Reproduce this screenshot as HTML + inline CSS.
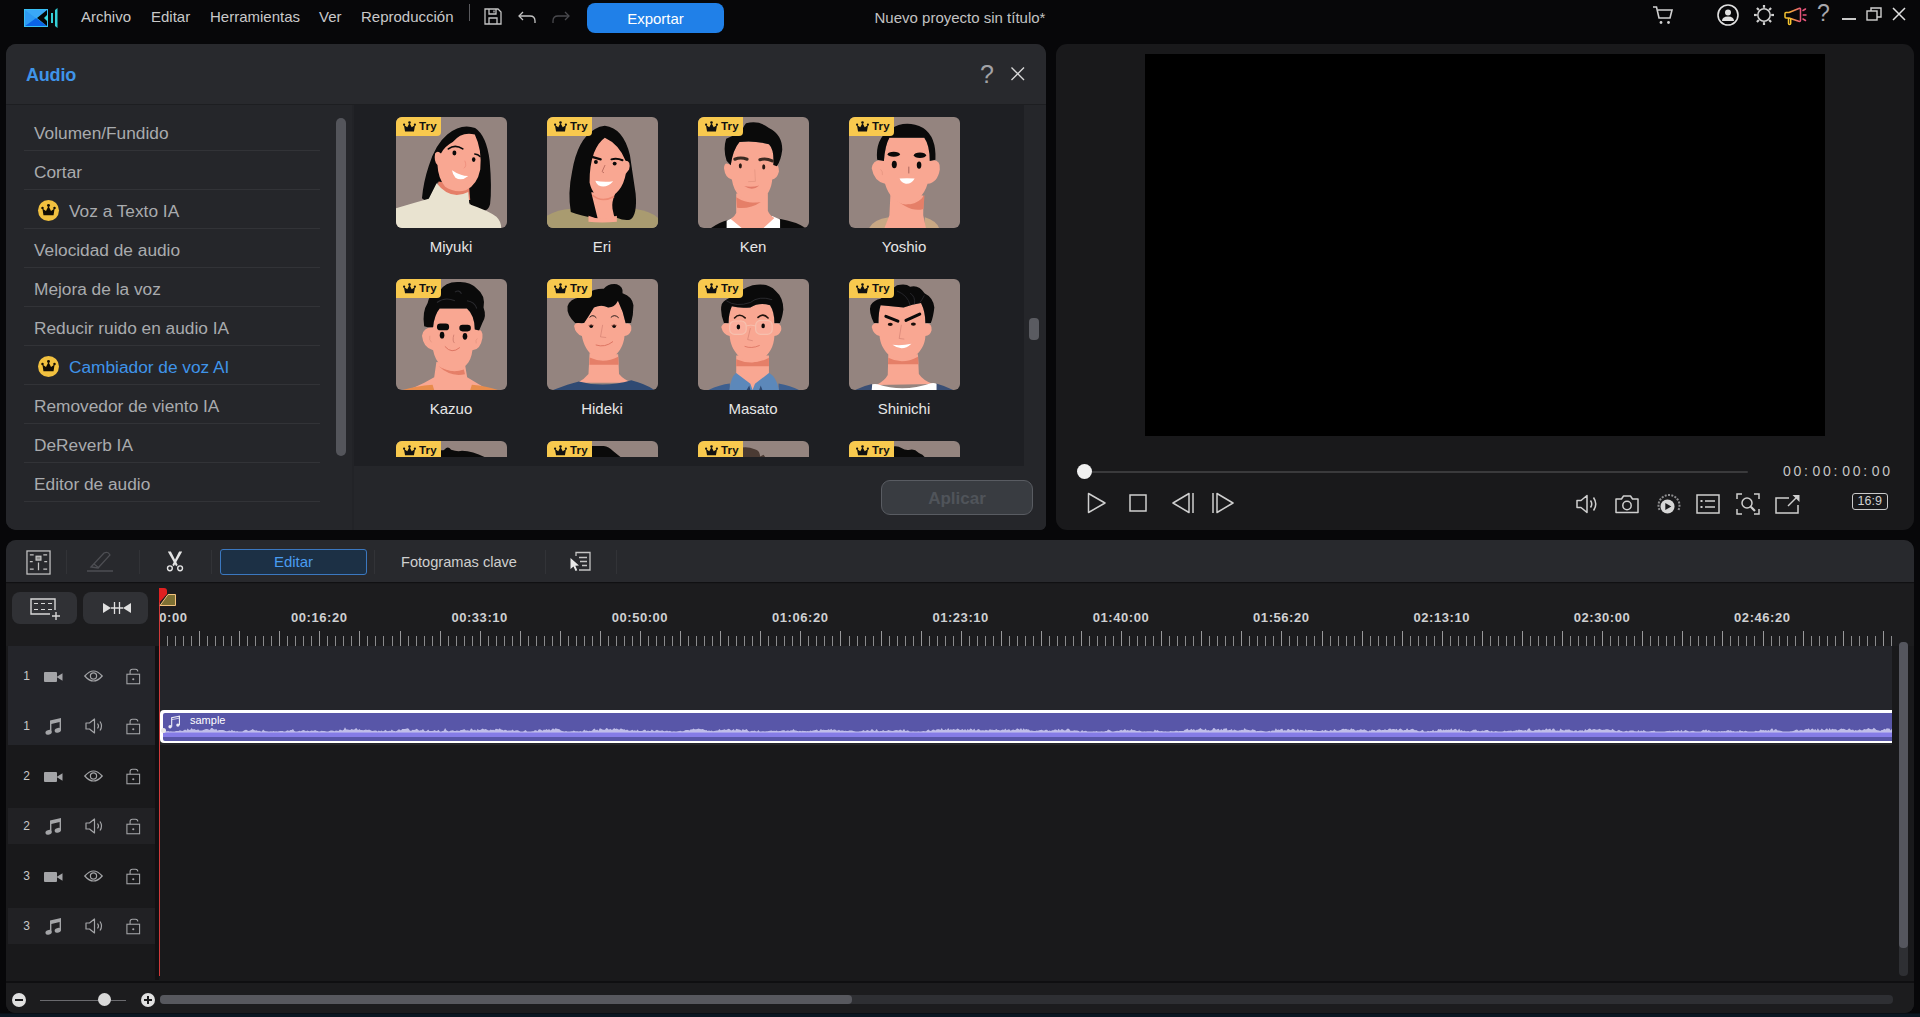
<!DOCTYPE html>
<html lang="es"><head><meta charset="utf-8"><title>Nuevo proyecto sin título</title>
<style>
*{box-sizing:border-box;margin:0;padding:0}
html,body{width:1920px;height:1017px;overflow:hidden;background:linear-gradient(#070709,#070709 1013px,#0b1722 1014px);font-family:"Liberation Sans",sans-serif;color:#c8c8c8}
.a{position:absolute}
svg{position:absolute;overflow:visible}
.menu span{position:absolute;top:8px;font-size:15px;color:#c9c9c9;white-space:nowrap}
#audio{left:6px;top:44px;width:1040px;height:486px;background:#25262a;border-radius:10px 10px 6px 10px;overflow:hidden}
#ahead{left:0;top:0;width:1040px;height:61px;background:#28292d;border-bottom:1px solid #1d1e21}
#side{left:0;top:61px;width:346px;height:425px;background:#25262a}
.it{position:absolute;left:18px;width:296px;height:39px;border-bottom:1px solid #323337;font-size:17.3px;color:#a9abae;line-height:42px;padding-left:10px;white-space:nowrap}
.it.cr{padding-left:45px}
.it.sel{color:#3f94e9}
#content{left:347px;top:61px;width:671px;height:361px;background:#1e1f23;overflow:hidden}
.card{position:absolute;width:111px;height:111px;border-radius:6px;background:#94847f;overflow:hidden}
.try{position:absolute;left:0;top:0;width:45px;height:19px;background:#f8c94e;border-bottom-right-radius:4px;font-size:11.5px;font-weight:bold;color:#111;line-height:19px;padding-left:23px;letter-spacing:0.2px}
.nm{position:absolute;width:111px;text-align:center;font-size:15px;color:#e6e6e6;white-space:nowrap}
#prev{left:1056px;top:44px;width:858px;height:486px;background:#19191b;border-radius:11px}
#tl{left:6px;top:540px;width:1908px;height:473px;background:#19191b;border-radius:10px 10px 9px 9px;overflow:hidden}
#tbar{left:0;top:0;width:1908px;height:43px;background:#28292d;border-bottom:1px solid #101012}
.sep{position:absolute;top:10px;width:1px;height:24px;background:#323337}
.rl{position:absolute;top:26px;font-size:13px;font-weight:bold;color:#cfd0d2;white-space:nowrap;letter-spacing:0.55px}
.a i{font-style:normal;margin-right:2px}
.tn{position:absolute;left:15.5px;width:10px;font-size:12px;color:#c8c8c8;text-align:center}
</style></head><body>

<div class="a menu" style="left:0;top:0;width:1920px;height:44px">
<span style="left:81px">Archivo</span>
<span style="left:151px">Editar</span>
<span style="left:210px">Herramientas</span>
<span style="left:319px">Ver</span>
<span style="left:361px">Reproducción</span>
<div class="a" style="left:469px;top:4px;width:1px;height:17px;background:#5a5a5e"></div>
<svg style="left:24px;top:8px" width="36" height="20" viewBox="0 0 36 20">
<defs><linearGradient id="lg" x1="0" y1="0" x2="1" y2="1"><stop offset="0" stop-color="#3fb6ff"/><stop offset="1" stop-color="#0a68e8"/></linearGradient></defs>
<rect x="0" y="1" width="24" height="18" fill="#39c0f5"/>
<path d="M1 2 L23 2 L12 10 Z" fill="#3aa8f7"/><path d="M1 2 L12 10 L1 18Z" fill="#2f9af3"/><path d="M1 18 L12 10 L23 18Z" fill="#0a63e6"/>
<path d="M23 2 L23 18 L13 10 Z" fill="#050608"/>
<path d="M24 6 L20 10 L24 14Z" fill="#3ad6e0"/>
<rect x="27" y="5" width="2" height="10" fill="#35d0d8"/><path d="M31 2 L33.5 0 L33.5 20 L31 18Z" fill="#35d0d8"/>
</svg>
<svg style="left:484px;top:8px" width="18" height="17" viewBox="0 0 18 17" fill="none" stroke="#c4c4c4" stroke-width="1.3"><path d="M1 1 H14 L17 4 V16 H1Z"/><path d="M5 1 V6 H12 V1"/><path d="M5 16 V10 H13 V16"/><path d="M10 2.5v2"/></svg>
<svg style="left:518px;top:11px" width="18" height="13" viewBox="0 0 18 13" fill="none" stroke="#c4c4c4" stroke-width="1.3"><path d="M5 1 L1 5 L5 9"/><path d="M1 5 H12 Q17 5 17 10 V12"/></svg>
<svg style="left:552px;top:11px" width="18" height="13" viewBox="0 0 18 13" fill="none" stroke="#4a4a4e" stroke-width="1.3"><path d="M13 1 L17 5 L13 9"/><path d="M17 5 H6 Q1 5 1 10 V12"/></svg>
<div class="a" style="left:587px;top:3px;width:137px;height:30px;background:#2080e8;border-radius:8px;color:#fff;font-size:15px;text-align:center;line-height:31px">Exportar</div>
<div class="a" style="left:760px;top:9px;width:400px;text-align:center;font-size:15px;color:#c2c2c2;white-space:nowrap">Nuevo proyecto sin título*</div>
<svg style="left:1653px;top:6px" width="22" height="20" viewBox="0 0 22 20" fill="none" stroke="#d0d0d0" stroke-width="1.6"><path d="M0 1 H3.5 L6 12 H17 L19 4 H5"/><circle cx="8" cy="16.5" r="1.4" fill="#d0d0d0" stroke="none"/><circle cx="15.5" cy="16.5" r="1.4" fill="#d0d0d0" stroke="none"/></svg>
<svg style="left:1717px;top:4px" width="22" height="22" viewBox="0 0 22 22" fill="none" stroke="#e0e0e0" stroke-width="1.6"><circle cx="11" cy="11" r="10"/><circle cx="11" cy="8.5" r="3" fill="#e0e0e0" stroke="none"/><path d="M5 17 Q5 12.5 11 12.5 Q17 12.5 17 17Z" fill="#e0e0e0" stroke="none"/></svg>
<svg style="left:1753px;top:4px" width="22" height="22" viewBox="-11 -11 22 22" fill="none" stroke="#d0d0d0" stroke-width="1.5"><circle r="6.2"/><path d="M7.20 0.00 L10.00 0.00" stroke-width="2.2"/><path d="M5.09 5.09 L7.07 7.07" stroke-width="2.2"/><path d="M0.00 7.20 L0.00 10.00" stroke-width="2.2"/><path d="M-5.09 5.09 L-7.07 7.07" stroke-width="2.2"/><path d="M-7.20 0.00 L-10.00 0.00" stroke-width="2.2"/><path d="M-5.09 -5.09 L-7.07 -7.07" stroke-width="2.2"/><path d="M-0.00 -7.20 L-0.00 -10.00" stroke-width="2.2"/><path d="M5.09 -5.09 L7.07 -7.07" stroke-width="2.2"/></svg>
<svg style="left:1784px;top:6px" width="24" height="20" viewBox="0 0 24 20" fill="none" stroke-width="1.5"><defs><linearGradient id="mg" x1="0" y1="0" x2="1" y2="0"><stop offset="0" stop-color="#f5c52e"/><stop offset="0.45" stop-color="#f0a040"/><stop offset="1" stop-color="#e8557c"/></linearGradient></defs><path d="M2 6.5 Q1 6.5 1 7.5 V11 Q1 12 2 12 H5 L15.5 15.5 Q16.5 15.5 16.5 14.5 V3 Q16.5 2 15.5 2.3 L5 6.5Z" stroke="url(#mg)" stroke-linejoin="round"/><path d="M4.5 12 V17.5 Q4.5 18.5 5.5 18.5 Q6.7 18.5 6.7 17.5 V12.6" stroke="#f5c52e"/><path d="M19 4.5 L21.5 3 M19.2 9 H22 M19 13 L21.5 14.5" stroke="#e8557c" stroke-linecap="round"/></svg>
<div class="a" style="left:1817px;top:0px;font-size:23px;color:#a8a8ae">?</div>
<div class="a" style="left:1842px;top:18px;width:14px;height:2px;background:#c8c8c8"></div>
<svg style="left:1866px;top:7px" width="16" height="14" viewBox="0 0 16 14" fill="none" stroke="#d0d0d0" stroke-width="1.4"><rect x="1" y="4" width="10" height="9"/><path d="M5 4 V1 H15 V10 H11"/></svg>
<svg style="left:1892px;top:7px" width="14" height="14" viewBox="0 0 14 14" fill="none" stroke="#e0e0e0" stroke-width="1.5"><path d="M1 1 L13 13 M13 1 L1 13"/></svg>
</div>
<div id="audio" class="a">
<div id="ahead" class="a"><div class="a" style="left:20px;top:20.5px;font-size:18px;font-weight:bold;color:#3f94e9;letter-spacing:-0.2px">Audio</div>
<div class="a" style="left:974px;top:15.5px;font-size:25px;color:#a2a2a6">?</div>
<svg style="left:1005px;top:23px" width="13.5" height="13.5" viewBox="0 0 14 14" fill="none" stroke="#d8d8d8" stroke-width="1.4"><path d="M0.5 0.5 L13.5 13.5 M13.5 0.5 L0.5 13.5"/></svg>
</div>
<div id="side" class="a">
<div class="it" style="top:7px">Volumen/Fundido</div>
<div class="it" style="top:46px">Cortar</div>
<div class="it cr" style="top:85px"><svg style="left:14px;top:10px" width="21" height="21" viewBox="0 0 20 20"><circle cx="10" cy="10" r="10" fill="#f2c13f"/><path d="M5.2 14.6 L4.2 8 L7.6 10.4 L10 5.8 L12.4 10.4 L15.8 8 L14.8 14.6Z" fill="#120d04"/><circle cx="4.3" cy="7.6" r="1.2" fill="#120d04"/><circle cx="10" cy="5.2" r="1.4" fill="#120d04"/><circle cx="15.7" cy="7.6" r="1.2" fill="#120d04"/></svg>Voz a Texto IA</div>
<div class="it" style="top:124px">Velocidad de audio</div>
<div class="it" style="top:163px">Mejora de la voz</div>
<div class="it" style="top:202px">Reducir ruido en audio IA</div>
<div class="it cr sel" style="top:241px"><svg style="left:14px;top:10px" width="21" height="21" viewBox="0 0 20 20"><circle cx="10" cy="10" r="10" fill="#f2c13f"/><path d="M5.2 14.6 L4.2 8 L7.6 10.4 L10 5.8 L12.4 10.4 L15.8 8 L14.8 14.6Z" fill="#120d04"/><circle cx="4.3" cy="7.6" r="1.2" fill="#120d04"/><circle cx="10" cy="5.2" r="1.4" fill="#120d04"/><circle cx="15.7" cy="7.6" r="1.2" fill="#120d04"/></svg>Cambiador de voz AI</div>
<div class="it" style="top:280px">Removedor de viento IA</div>
<div class="it" style="top:319px">DeReverb IA</div>
<div class="it" style="top:358px">Editor de audio</div>
<div class="a" style="left:330px;top:13px;width:10px;height:338px;background:#54555b;border-radius:5px"></div>
</div>
<div id="content" class="a"><div class="a" style="left:0;top:0;width:671px;height:352px;overflow:hidden">
<div class="card" id="c00" style="left:43px;top:12px"><svg style="left:0;top:0" width="111" height="111" viewBox="0 0 1017 1017">
<path d="M560 105 Q640 70 725 100 Q830 170 858 400 Q880 650 862 800 Q840 880 770 850 Q700 830 655 770 L650 600 L380 600 L330 720 Q285 790 238 745 Q250 600 300 450 Q360 250 470 160 Q520 120 560 105Z" fill="#0a0a0a"/>
<path d="M390 590 L370 760 L680 760 L670 640Z" fill="#e57f68"/>
<path d="M0 835 Q160 790 300 750 L372 608 Q500 770 662 688 L672 800 Q850 860 920 915 Q962 955 964 1017 L0 1017Z" fill="#e9e3d0"/>
<path d="M520 230 Q600 130 722 160 Q790 300 772 480 Q745 620 640 672 Q540 700 450 640 Q385 560 380 440 Q345 410 358 335 Q380 300 412 335 Q445 270 520 230Z" fill="#f9a792"/>
<path d="M480 292 Q540 245 612 292" fill="none" stroke="#0a0a0a" stroke-width="16" stroke-linecap="round"/>
<path d="M722 340 Q752 342 770 362" fill="none" stroke="#0a0a0a" stroke-width="14" stroke-linecap="round"/>
<ellipse cx="535" cy="330" rx="18" ry="22" fill="#0a0a0a"/><ellipse cx="712" cy="390" rx="16" ry="22" fill="#0a0a0a"/>
<path d="M630 400 Q652 450 622 470" fill="none" stroke="#ee8f7c" stroke-width="8"/>
<path d="M513 487 Q590 540 662 540 Q600 592 545 556 Q520 530 513 487Z" fill="#fff"/>
</svg><div class="try"><svg style="left:6.5px;top:3.5px" width="13" height="11" viewBox="0 0 14 11.5"><path d="M2.2 11 L1 4.2 L4.6 6.6 L7 2 L9.4 6.6 L13 4.2 L11.8 11Z" fill="#111"/><circle cx="1.2" cy="3.8" r="1.2" fill="#111"/><circle cx="7" cy="1.4" r="1.4" fill="#111"/><circle cx="12.8" cy="3.8" r="1.2" fill="#111"/></svg>Try</div></div>
<div class="nm" style="left:42.5px;top:133px">Miyuki</div>
<div class="card" id="c01" style="left:194px;top:12px"><svg style="left:0;top:0" width="111" height="111" viewBox="0 0 1017 1017">
<path d="M0 905 Q100 845 220 840 L800 840 Q950 860 1017 925 L1017 1017 L0 1017Z" fill="#a99b70"/>
<path d="M530 80 Q700 100 760 350 Q782 500 812 700 Q830 900 760 942 Q650 955 585 880 L470 932 Q300 905 218 870 Q188 700 230 500 Q280 200 440 110 Q480 85 530 80Z" fill="#0a0a0a"/>
<path d="M405 690 L468 945 L625 955 L600 840 Q590 780 625 700Z" fill="#f9a792"/>
<path d="M380 905 Q500 960 640 905 L640 960 Q500 975 380 960Z" fill="#f9a792"/>
<path d="M530 190 Q660 250 720 400 Q772 400 752 480 L722 520 Q690 700 540 752 Q420 742 390 600 Q388 450 430 330 Q470 230 530 190Z" fill="#f9a792"/>
<path d="M415 715 Q500 790 615 728" fill="none" stroke="#ee8a74" stroke-width="14"/>
<path d="M420 368 L492 388" stroke="#0a0a0a" stroke-width="20" stroke-linecap="round"/>
<path d="M590 388 Q640 374 692 396" fill="none" stroke="#0a0a0a" stroke-width="18" stroke-linecap="round"/>
<circle cx="448" cy="412" r="18" fill="#0a0a0a"/><circle cx="620" cy="427" r="18" fill="#0a0a0a"/>
<path d="M532 440 L505 500 L522 512" fill="none" stroke="#b8695c" stroke-width="8"/>
<path d="M443 583 Q520 600 607 588 Q540 662 470 626 Q450 610 443 583Z" fill="#fff"/>
</svg><div class="try"><svg style="left:6.5px;top:3.5px" width="13" height="11" viewBox="0 0 14 11.5"><path d="M2.2 11 L1 4.2 L4.6 6.6 L7 2 L9.4 6.6 L13 4.2 L11.8 11Z" fill="#111"/><circle cx="1.2" cy="3.8" r="1.2" fill="#111"/><circle cx="7" cy="1.4" r="1.4" fill="#111"/><circle cx="12.8" cy="3.8" r="1.2" fill="#111"/></svg>Try</div></div>
<div class="nm" style="left:193.5px;top:133px">Eri</div>
<div class="card" id="c02" style="left:345px;top:12px"><svg style="left:0;top:0" width="111" height="111" viewBox="0 0 1017 1017">
<path d="M120 1017 Q200 960 275 943 L265 1017Z" fill="#0a0a0a"/><path d="M745 933 Q900 960 985 1017 L745 1017Z" fill="#0a0a0a"/>
<path d="M262 950 L335 918 L410 1017 L262 1017Z" fill="#fff"/><path d="M752 940 L680 908 L595 1017 L752 1017Z" fill="#fff"/>
<path d="M350 700 L350 880 Q335 915 300 935 L400 1017 L600 1017 L700 925 Q655 900 640 860 L640 700Z" fill="#f9a792"/>
<path d="M350 735 Q450 800 575 778 Q480 845 358 832Z" fill="#e57f68"/>
<path d="M380 230 Q500 210 650 250 Q700 300 690 440 Q742 420 742 500 Q722 572 680 572 C670 700 590 782 500 782 C410 780 330 700 310 572 Q250 562 238 470 Q240 400 300 440 Q320 300 380 230Z" fill="#f9a792"/>
<path d="M440 58 Q560 28 650 100 Q772 160 772 300 Q760 400 722 452 L690 440 Q700 300 650 250 Q500 210 380 230 Q320 300 300 442 L262 400 Q228 300 258 200 Q330 160 400 150 Q410 90 440 58Z" fill="#0a0a0a"/>
<path d="M337 387 Q390 364 450 387" fill="none" stroke="#3b2a22" stroke-width="28" stroke-linecap="round"/>
<path d="M567 392 Q620 374 680 402" fill="none" stroke="#3b2a22" stroke-width="28" stroke-linecap="round"/>
<ellipse cx="388" cy="447" rx="14" ry="24" fill="#2a1a14"/><ellipse cx="602" cy="457" rx="14" ry="24" fill="#2a1a14"/>
<path d="M520 480 L526 590 L460 592" fill="none" stroke="#e0907c" stroke-width="6"/>
<path d="M423 633 Q490 647 562 628 Q500 684 423 633Z" fill="#e17a68"/>
</svg><div class="try"><svg style="left:6.5px;top:3.5px" width="13" height="11" viewBox="0 0 14 11.5"><path d="M2.2 11 L1 4.2 L4.6 6.6 L7 2 L9.4 6.6 L13 4.2 L11.8 11Z" fill="#111"/><circle cx="1.2" cy="3.8" r="1.2" fill="#111"/><circle cx="7" cy="1.4" r="1.4" fill="#111"/><circle cx="12.8" cy="3.8" r="1.2" fill="#111"/></svg>Try</div></div>
<div class="nm" style="left:344.5px;top:133px">Ken</div>
<div class="card" id="c03" style="left:496px;top:12px"><svg style="left:0;top:0" width="111" height="111" viewBox="0 0 1017 1017">
<path d="M185 1017 Q220 940 365 918 L335 1017Z" fill="#c9a884"/><path d="M695 918 Q800 950 825 1017 L690 1017Z" fill="#c9a884"/>
<path d="M380 700 L370 900 L325 1017 L705 1017 L680 900 L682 720Z" fill="#f9a792"/>
<path d="M380 715 Q480 800 560 800 Q640 790 692 715 L682 842 Q560 885 380 715Z" fill="#e57f68"/>
<path d="M370 190 L690 190 Q740 260 740 400 Q842 380 832 480 Q812 602 720 612 C690 720 600 800 520 802 C440 800 360 720 330 612 Q230 592 208 470 Q220 380 320 400 Q330 260 370 190Z" fill="#f9a792"/>
<path d="M258 392 Q238 200 380 110 Q520 18 680 100 Q802 180 792 392 L740 402 Q740 260 690 190 L370 190 Q330 260 320 402Z" fill="#0a0a0a"/>
<ellipse cx="410" cy="342" rx="56" ry="23" fill="#0a0a0a"/><ellipse cx="650" cy="350" rx="56" ry="25" fill="#0a0a0a"/>
<ellipse cx="415" cy="435" rx="23" ry="34" fill="#0a0a0a"/><ellipse cx="642" cy="440" rx="21" ry="33" fill="#0a0a0a"/>
<path d="M548 455 L548 517" stroke="#a8655b" stroke-width="9"/>
<path d="M290 480 Q312 500 306 532" fill="none" stroke="#e0907c" stroke-width="6"/>
<path d="M463 563 Q530 558 602 563 Q570 617 520 612 Q480 602 463 563Z" fill="#fff"/>
</svg><div class="try"><svg style="left:6.5px;top:3.5px" width="13" height="11" viewBox="0 0 14 11.5"><path d="M2.2 11 L1 4.2 L4.6 6.6 L7 2 L9.4 6.6 L13 4.2 L11.8 11Z" fill="#111"/><circle cx="1.2" cy="3.8" r="1.2" fill="#111"/><circle cx="7" cy="1.4" r="1.4" fill="#111"/><circle cx="12.8" cy="3.8" r="1.2" fill="#111"/></svg>Try</div></div>
<div class="nm" style="left:495.5px;top:133px">Yoshio</div>
<div class="card" id="c10" style="left:43px;top:174px"><svg style="left:0;top:0" width="111" height="111" viewBox="0 0 1017 1017">
<path d="M370 760 L350 900 Q250 960 150 1002 L150 1017 L850 1017 Q750 960 652 900 L632 780Z" fill="#f9a792"/>
<path d="M388 798 Q500 872 622 830 L632 872 Q500 902 388 798Z" fill="#e57f68"/>
<path d="M60 1017 Q180 978 335 968 L350 1017Z" fill="#e88c4c"/><path d="M695 968 Q830 978 935 1017 L680 1017Z" fill="#e88c4c"/>
<path d="M400 270 L650 270 Q720 330 722 460 Q802 450 792 540 Q772 652 700 652 C690 770 610 840 530 842 C450 840 360 770 340 652 Q250 632 238 520 Q250 440 340 442 Q350 330 400 270Z" fill="#f9a792"/>
<path d="M258 432 Q238 300 290 220 Q300 140 400 110 Q450 28 560 28 Q680 18 742 90 Q822 150 802 260 Q832 340 792 400 L762 472 L722 462 Q720 330 650 270 L400 270 Q350 330 340 442 L290 442Z" fill="#0a0a0a"/>
<path d="M375 215 Q450 160 540 200 M540 120 Q580 95 600 135 M650 200 Q720 210 740 270" fill="none" stroke="#2a2a2e" stroke-width="10"/>
<rect x="375" y="408" width="112" height="62" rx="31" fill="#0a0a0a"/><rect x="580" y="420" width="106" height="60" rx="30" fill="#0a0a0a"/>
<ellipse cx="422" cy="515" rx="21" ry="31" fill="#0a0a0a"/><ellipse cx="632" cy="525" rx="21" ry="31" fill="#0a0a0a"/>
<path d="M530 510 Q514 570 536 587" fill="none" stroke="#c9776a" stroke-width="7"/>
<path d="M450 620 Q510 692 582 630" fill="none" stroke="#dc7462" stroke-width="9" stroke-linecap="round"/>
<path d="M310 520 Q300 560 325 580 M745 545 Q725 560 735 590" fill="none" stroke="#e0907c" stroke-width="6"/>
</svg><div class="try"><svg style="left:6.5px;top:3.5px" width="13" height="11" viewBox="0 0 14 11.5"><path d="M2.2 11 L1 4.2 L4.6 6.6 L7 2 L9.4 6.6 L13 4.2 L11.8 11Z" fill="#111"/><circle cx="1.2" cy="3.8" r="1.2" fill="#111"/><circle cx="7" cy="1.4" r="1.4" fill="#111"/><circle cx="12.8" cy="3.8" r="1.2" fill="#111"/></svg>Try</div></div>
<div class="nm" style="left:42.5px;top:295px">Kazuo</div>
<div class="card" id="c11" style="left:194px;top:174px"><svg style="left:0;top:0" width="111" height="111" viewBox="0 0 1017 1017">
<path d="M390 680 L380 870 Q340 920 280 950 L780 950 Q700 920 660 870 L652 690Z" fill="#f9a792"/>
<path d="M390 720 Q520 780 652 712 L656 785 L388 785Z" fill="#e57f68"/>
<path d="M55 1017 Q200 960 292 938 Q520 1002 772 928 Q900 960 985 1017Z" fill="#2f4a73"/>
<path d="M430 260 Q500 230 560 260 Q620 260 650 200 Q700 300 722 410 Q782 400 772 470 Q752 522 710 522 C700 640 620 740 520 742 C420 740 340 640 320 522 Q260 502 248 430 Q260 390 320 410 L340 400 Q390 330 430 260Z" fill="#f9a792"/>
<path d="M258 402 Q178 330 188 250 Q210 180 300 170 Q380 120 430 100 Q480 88 520 90 Q560 38 640 48 Q702 70 692 130 Q782 160 792 240 Q792 330 770 402 L720 402 Q700 300 650 200 Q620 262 560 262 Q500 230 430 262 Q390 330 340 402Z" fill="#0a0a0a"/>
<path d="M390 352 Q420 318 452 356" fill="none" stroke="#0a0a0a" stroke-width="8"/><path d="M585 352 Q620 318 657 356" fill="none" stroke="#0a0a0a" stroke-width="8"/>
<circle cx="405" cy="434" r="16" fill="#0a0a0a"/><circle cx="615" cy="434" r="16" fill="#0a0a0a"/>
<path d="M380 425 H430 M590 425 H640" stroke="#7a3a30" stroke-width="5"/>
<path d="M510 420 L490 530 L542 536" fill="none" stroke="#c9776a" stroke-width="5"/>
<path d="M450 605 Q530 632 602 575" fill="none" stroke="#dc7462" stroke-width="9" stroke-linecap="round"/>
</svg><div class="try"><svg style="left:6.5px;top:3.5px" width="13" height="11" viewBox="0 0 14 11.5"><path d="M2.2 11 L1 4.2 L4.6 6.6 L7 2 L9.4 6.6 L13 4.2 L11.8 11Z" fill="#111"/><circle cx="1.2" cy="3.8" r="1.2" fill="#111"/><circle cx="7" cy="1.4" r="1.4" fill="#111"/><circle cx="12.8" cy="3.8" r="1.2" fill="#111"/></svg>Try</div></div>
<div class="nm" style="left:193.5px;top:295px">Hideki</div>
<div class="card" id="c12" style="left:345px;top:174px"><svg style="left:0;top:0" width="111" height="111" viewBox="0 0 1017 1017">
<path d="M95 1017 Q200 968 292 958 L292 1017Z" fill="#3d5f8f"/><path d="M738 958 Q850 978 925 1017 L738 1017Z" fill="#3d5f8f"/>
<path d="M288 1017 Q298 900 350 858 L650 858 Q722 900 742 1017Z" fill="#5c88ba"/>
<path d="M350 700 L350 862 L480 960 L500 1017 L522 960 L650 862 L650 700Z" fill="#f9a792"/>
<path d="M350 735 Q500 800 650 722 L650 800 L350 800Z" fill="#e57f68"/>
<path d="M445 1017 L470 975 L480 1017Z M560 1017 L575 975 L590 1017Z" fill="#2f4a73"/>
<path d="M310 250 Q380 270 480 260 Q560 210 660 240 Q700 300 700 410 Q772 400 762 470 Q742 522 700 522 C695 660 600 760 500 762 C400 760 300 660 290 522 Q230 512 213 440 Q230 390 280 410 Q280 320 310 250Z" fill="#f9a792"/>
<path d="M238 402 Q198 300 218 230 Q250 180 310 170 Q400 88 500 58 Q640 28 712 110 Q782 170 782 280 Q772 360 750 402 L700 402 Q700 300 660 240 Q560 210 480 260 Q380 270 310 250 Q280 320 280 402Z" fill="#0a0a0a"/>
<path d="M260 200 Q350 260 480 215 Q560 150 680 190" fill="none" stroke="#3a3a40" stroke-width="6"/>
<rect x="290" y="385" width="152" height="122" rx="45" fill="#fbb9a8" fill-opacity="0.45" stroke="#f6c0ae" stroke-width="11"/>
<rect x="528" y="380" width="152" height="127" rx="45" fill="#fbb9a8" fill-opacity="0.45" stroke="#f6c0ae" stroke-width="11"/>
<path d="M442 430 Q485 415 528 430" fill="none" stroke="#f6c0ae" stroke-width="9"/>
<path d="M335 357 Q380 308 432 357" fill="none" stroke="#22140e" stroke-width="15" stroke-linecap="round"/>
<path d="M550 352 Q595 308 642 357" fill="none" stroke="#22140e" stroke-width="15" stroke-linecap="round"/>
<ellipse cx="370" cy="440" rx="16" ry="22" fill="#0a0a0a"/><ellipse cx="597" cy="430" rx="16" ry="22" fill="#0a0a0a"/>
<path d="M480 450 L455 555 L502 566" fill="none" stroke="#c9776a" stroke-width="5"/>
<path d="M430 618 Q490 642 562 610" fill="none" stroke="#dc7462" stroke-width="8" stroke-linecap="round"/>
</svg><div class="try"><svg style="left:6.5px;top:3.5px" width="13" height="11" viewBox="0 0 14 11.5"><path d="M2.2 11 L1 4.2 L4.6 6.6 L7 2 L9.4 6.6 L13 4.2 L11.8 11Z" fill="#111"/><circle cx="1.2" cy="3.8" r="1.2" fill="#111"/><circle cx="7" cy="1.4" r="1.4" fill="#111"/><circle cx="12.8" cy="3.8" r="1.2" fill="#111"/></svg>Try</div></div>
<div class="nm" style="left:344.5px;top:295px">Masato</div>
<div class="card" id="c13" style="left:496px;top:174px"><svg style="left:0;top:0" width="111" height="111" viewBox="0 0 1017 1017">
<path d="M360 690 L355 880 Q330 930 250 972 L770 962 Q680 930 640 870 L632 690Z" fill="#f9a792"/>
<path d="M360 722 Q490 790 632 712 L636 782 L357 782Z" fill="#e57f68"/>
<path d="M55 1017 Q130 980 212 963 L212 1017Z" fill="#3a4f75"/><path d="M798 958 Q880 980 955 1017 L798 1017Z" fill="#3a4f75"/>
<path d="M208 1017 L213 965 Q240 958 262 965 Q500 1042 750 955 Q780 948 802 960 L802 1017Z" fill="#fff"/>
<path d="M290 240 Q380 250 500 260 Q580 230 660 220 Q700 300 700 410 Q762 400 757 470 Q742 522 700 522 C695 650 590 745 490 747 C390 745 290 650 280 522 Q225 512 208 440 Q220 395 270 410 Q270 300 290 240Z" fill="#f9a792"/>
<path d="M228 402 Q178 300 198 240 Q230 190 290 180 Q380 100 440 58 Q520 38 560 70 Q640 48 692 130 Q772 170 782 260 Q772 350 750 402 L700 402 Q700 300 660 220 Q580 230 500 260 Q380 250 290 240 Q270 300 270 402Z" fill="#0a0a0a"/>
<path d="M440 110 Q540 150 560 240 M560 130 Q610 160 600 230 M690 150 Q670 190 650 215" fill="none" stroke="#33333a" stroke-width="6"/>
<path d="M338 342 L448 386" stroke="#0a0a0a" stroke-width="28" stroke-linecap="round"/><path d="M522 380 L648 322" stroke="#0a0a0a" stroke-width="28" stroke-linecap="round"/>
<ellipse cx="378" cy="415" rx="23" ry="15" fill="#1a0e0a"/><ellipse cx="590" cy="413" rx="23" ry="15" fill="#1a0e0a"/>
<path d="M480 420 L460 545 L507 551" fill="none" stroke="#c9776a" stroke-width="5"/>
<path d="M398 603 Q490 612 572 593 Q490 672 398 603Z" fill="#fff"/>
</svg><div class="try"><svg style="left:6.5px;top:3.5px" width="13" height="11" viewBox="0 0 14 11.5"><path d="M2.2 11 L1 4.2 L4.6 6.6 L7 2 L9.4 6.6 L13 4.2 L11.8 11Z" fill="#111"/><circle cx="1.2" cy="3.8" r="1.2" fill="#111"/><circle cx="7" cy="1.4" r="1.4" fill="#111"/><circle cx="12.8" cy="3.8" r="1.2" fill="#111"/></svg>Try</div></div>
<div class="nm" style="left:495.5px;top:295px">Shinichi</div>
<div class="card" id="c20" style="left:43px;top:336px"><svg style="left:0;top:0" width="111" height="111" viewBox="0 0 1017 1017"><path d="M400 160 L400 75 Q420 95 445 78 Q475 40 505 80 Q560 100 605 90 Q710 95 822 152 L822 160Z" fill="#0a0a0a"/></svg><div class="try"><svg style="left:6.5px;top:3.5px" width="13" height="11" viewBox="0 0 14 11.5"><path d="M2.2 11 L1 4.2 L4.6 6.6 L7 2 L9.4 6.6 L13 4.2 L11.8 11Z" fill="#111"/><circle cx="1.2" cy="3.8" r="1.2" fill="#111"/><circle cx="7" cy="1.4" r="1.4" fill="#111"/><circle cx="12.8" cy="3.8" r="1.2" fill="#111"/></svg>Try</div></div>
<div class="card" id="c21" style="left:194px;top:336px"><svg style="left:0;top:0" width="111" height="111" viewBox="0 0 1017 1017"><path d="M400 160 L400 45 L520 45 Q565 50 605 92 L680 152 L680 160Z" fill="#0a0a0a"/></svg><div class="try"><svg style="left:6.5px;top:3.5px" width="13" height="11" viewBox="0 0 14 11.5"><path d="M2.2 11 L1 4.2 L4.6 6.6 L7 2 L9.4 6.6 L13 4.2 L11.8 11Z" fill="#111"/><circle cx="1.2" cy="3.8" r="1.2" fill="#111"/><circle cx="7" cy="1.4" r="1.4" fill="#111"/><circle cx="12.8" cy="3.8" r="1.2" fill="#111"/></svg>Try</div></div>
<div class="card" id="c22" style="left:345px;top:336px"><svg style="left:0;top:0" width="111" height="111" viewBox="0 0 1017 1017"><path d="M400 160 L400 60 Q460 50 520 75 Q560 85 565 120 L570 142 L600 125 L625 160Z" fill="#4a3a33"/></svg><div class="try"><svg style="left:6.5px;top:3.5px" width="13" height="11" viewBox="0 0 14 11.5"><path d="M2.2 11 L1 4.2 L4.6 6.6 L7 2 L9.4 6.6 L13 4.2 L11.8 11Z" fill="#111"/><circle cx="1.2" cy="3.8" r="1.2" fill="#111"/><circle cx="7" cy="1.4" r="1.4" fill="#111"/><circle cx="12.8" cy="3.8" r="1.2" fill="#111"/></svg>Try</div></div>
<div class="card" id="c23" style="left:496px;top:336px"><svg style="left:0;top:0" width="111" height="111" viewBox="0 0 1017 1017"><path d="M400 160 L400 50 Q450 40 480 65 Q520 90 560 80 Q600 70 640 110 Q690 130 700 160Z" fill="#0a0a0a"/></svg><div class="try"><svg style="left:6.5px;top:3.5px" width="13" height="11" viewBox="0 0 14 11.5"><path d="M2.2 11 L1 4.2 L4.6 6.6 L7 2 L9.4 6.6 L13 4.2 L11.8 11Z" fill="#111"/><circle cx="1.2" cy="3.8" r="1.2" fill="#111"/><circle cx="7" cy="1.4" r="1.4" fill="#111"/><circle cx="12.8" cy="3.8" r="1.2" fill="#111"/></svg>Try</div></div>
</div></div>
<div class="a" style="left:1018px;top:61px;width:22px;height:361px;background:#25262a"></div>
<div class="a" style="left:1023px;top:274px;width:10px;height:22px;background:#5a5b61;border-radius:4px"></div>
<div class="a" style="left:347px;top:422px;width:693px;height:64px;background:#25262a"></div>
<div class="a" style="left:346px;top:61px;width:2px;height:425px;background:#222327"></div>
<div class="a" style="left:875px;top:436px;width:152px;height:35px;border:1px solid #595c62;background:#393c41;border-radius:9px;text-align:center;line-height:35px;font-size:17px;font-weight:bold;color:#50545a">Aplicar</div>
</div>
<div id="prev" class="a">
<div class="a" style="left:89px;top:10px;width:680px;height:382px;background:#000"></div>
<div class="a" style="left:28px;top:426.5px;width:664px;height:2px;background:#3a3a3c;border-radius:1px"></div>
<div class="a" style="left:21px;top:420px;width:15px;height:15px;background:#f0f0f0;border-radius:50%"></div>
<div class="a" style="left:727px;top:419px;font-size:14px;color:#c6c6c6;letter-spacing:2.7px;white-space:nowrap">00<i>:</i>00<i>:</i>00<i>:</i>00</div>
<svg style="left:31px;top:448px" width="20" height="22" viewBox="0 0 20 22" fill="none" stroke="#cfcfcf" stroke-width="1.5"><path d="M1.5 1.5 L18 11 L1.5 20.5Z" stroke-linejoin="round"/></svg>
<svg style="left:73px;top:450px" width="18" height="18" viewBox="0 0 18 18" fill="none" stroke="#cfcfcf" stroke-width="1.5"><rect x="1" y="1" width="16" height="16"/></svg>
<svg style="left:115px;top:448px" width="24" height="22" viewBox="0 0 24 22" fill="none" stroke="#cfcfcf" stroke-width="1.5"><path d="M18 1.5 L2 11 L18 20.5Z" stroke-linejoin="round"/><path d="M22 1 V21"/></svg>
<svg style="left:155px;top:448px" width="24" height="22" viewBox="0 0 24 22" fill="none" stroke="#cfcfcf" stroke-width="1.5"><path d="M6 1.5 L22 11 L6 20.5Z" stroke-linejoin="round"/><path d="M2 1 V21"/></svg>
<svg style="left:520px;top:450px" width="22" height="20" viewBox="0 0 22 20" fill="none" stroke="#cfcfcf" stroke-width="1.5"><path d="M1 6.5 H5 L11 1.5 V18.5 L5 13.5 H1Z" stroke-linejoin="round"/><path d="M14.5 6.5 Q17 10 14.5 13.5"/><path d="M17.5 3.5 Q22 10 17.5 16.5"/></svg>
<svg style="left:559px;top:450px" width="24" height="20" viewBox="0 0 24 20" fill="none" stroke="#cfcfcf" stroke-width="1.5"><path d="M1 5 H6.5 L8.5 2 H15.5 L17.5 5 H23 V18.5 H1Z" stroke-linejoin="round"/><circle cx="12" cy="11.5" r="4.2"/></svg>
<svg style="left:600px;top:448px" width="26" height="24" viewBox="-13 -12 26 24"><circle cx="-1.5" cy="2.5" r="7" fill="#d6d6d6"/><path d="M-3.7 -1 L2.3 2.5 L-3.7 6Z" fill="#1a1a1c"/><rect x="-10.87" y="4.09" width="2" height="2" fill="#8e8e90" transform="rotate(160 -9.87 5.09)"/><rect x="-11.50" y="0.81" width="2" height="2" fill="#8e8e90" transform="rotate(178 -10.50 1.81)"/><rect x="-11.06" y="-2.51" width="2" height="2" fill="#8e8e90" transform="rotate(197 -10.06 -1.51)"/><rect x="-9.60" y="-5.52" width="2" height="2" fill="#8e8e90" transform="rotate(215 -8.60 -4.52)"/><rect x="-7.27" y="-7.92" width="2" height="2" fill="#8e8e90" transform="rotate(233 -6.27 -6.92)"/><rect x="-4.30" y="-9.47" width="2" height="2" fill="#8e8e90" transform="rotate(252 -3.30 -8.47)"/><rect x="-1.00" y="-10.00" width="2" height="2" fill="#8e8e90" transform="rotate(270 -0.00 -9.00)"/><rect x="2.30" y="-9.47" width="2" height="2" fill="#8e8e90" transform="rotate(288 3.30 -8.47)"/><rect x="5.27" y="-7.92" width="2" height="2" fill="#8e8e90" transform="rotate(307 6.27 -6.92)"/><rect x="7.60" y="-5.52" width="2" height="2" fill="#8e8e90" transform="rotate(325 8.60 -4.52)"/><rect x="9.06" y="-2.51" width="2" height="2" fill="#8e8e90" transform="rotate(343 10.06 -1.51)"/><rect x="9.50" y="0.81" width="2" height="2" fill="#8e8e90" transform="rotate(362 10.50 1.81)"/><rect x="8.87" y="4.09" width="2" height="2" fill="#8e8e90" transform="rotate(380 9.87 5.09)"/></svg>
<svg style="left:640px;top:450px" width="24" height="20" viewBox="0 0 24 20" fill="none" stroke="#cfcfcf" stroke-width="1.5"><rect x="1" y="1" width="22" height="18"/><path d="M9 7 H19 M9 13 H19"/><path d="M4.5 7 H6.5 M4.5 13 H6.5" stroke-width="2"/></svg>
<svg style="left:680px;top:449px" width="24" height="22" viewBox="0 0 24 22" fill="none" stroke="#cfcfcf" stroke-width="1.5"><path d="M1 6 V1 H6 M18 1 H23 V6 M23 16 V21 H18 M6 21 H1 V16"/><circle cx="11" cy="10" r="5"/><path d="M14.8 13.8 L19 18" stroke-width="2.2"/></svg>
<svg style="left:719px;top:449px" width="26" height="22" viewBox="0 0 26 22" fill="none" stroke="#cfcfcf" stroke-width="1.5"><path d="M14 5 H1 V20 H23 V12"/><path d="M13 13 L23 3"/><path d="M17.5 2 H24.5 V9Z" fill="#cfcfcf" stroke="none"/></svg>
<div class="a" style="left:796px;top:449px;width:35.5px;height:16.5px;border:1.3px solid #cacaca;border-radius:3px;font-size:12.5px;line-height:14px;text-align:center;color:#d0d0d0">16:9</div>
</div>
<div id="tl" class="a">
<div id="tbar" class="a">
<div class="sep" style="left:60px"></div>
<div class="sep" style="left:133px"></div>
<div class="sep" style="left:205px"></div>
<div class="sep" style="left:368px"></div>
<div class="sep" style="left:539px"></div>
<div class="sep" style="left:610px"></div>
<svg style="left:20px;top:10px" width="25" height="25" viewBox="0 0 26 26" fill="none" stroke="#c4c4c4" stroke-width="1.3"><rect x="1" y="1" width="24" height="24"/><path d="M4 5 H8 M18 5 H22 M4 12 H7 M19 12 H22 M4 20 H8 M18 20 H22 M13 13 V21" /><rect x="10.5" y="6.5" width="5" height="4" fill="#888"/></svg>
<svg style="left:80px;top:11px" width="28" height="22" viewBox="0 0 28 22" fill="none" stroke="#4d4e53" stroke-width="1.3"><path d="M1 20 H27"/><path d="M5 16 L18 2 Q22 0 24 4 L12 17Z"/><path d="M8 13 L13 17"/></svg>
<svg style="left:159px;top:11px" width="20" height="21" viewBox="0 0 19 21" fill="#e4e4e4"><path d="M2.3 0.5 L5.4 0.5 L12.2 14 L10.6 15.2Z"/><path d="M16.7 0.5 L13.6 0.5 L6.8 14 L8.4 15.2Z"/><circle cx="4.4" cy="17.3" r="2.4" fill="none" stroke="#e4e4e4" stroke-width="1.4"/><circle cx="14.6" cy="17.3" r="2.4" fill="none" stroke="#e4e4e4" stroke-width="1.4"/></svg>
<div class="a" style="left:214px;top:9px;width:147px;height:26px;border:1px solid #3b78c0;background:#1c3045;border-radius:3px;text-align:center;line-height:24px;font-size:15px;color:#4a9cf0">Editar</div>
<div class="a" style="left:395px;top:14px;font-size:14.6px;color:#cfcfcf;white-space:nowrap">Fotogramas clave</div>
<svg style="left:564px;top:11px" width="22" height="22" viewBox="0 0 22 22" fill="none" stroke="#c4c4c4" stroke-width="1.3"><path d="M6 5 V1.5 H20 V19 H9"/><path d="M9 6.5 H17 M10 10.5 H17 M12 14.5 H17"/><path d="M0.5 7 L0.5 18 L3.5 15.5 L5.5 20 L7.3 19.2 L5.3 14.8 L9 14.5Z" fill="#e8e8e8" stroke="none"/></svg>
</div>
<div class="a" style="left:0;top:44px;width:1908px;height:62px;background:#1c1c1e"></div>
<div class="a" style="left:6px;top:52px;width:65px;height:32px;background:#303135;border-radius:8px"></div>
<div class="a" style="left:77px;top:52px;width:65px;height:32px;background:#303135;border-radius:8px"></div>
<svg style="left:24px;top:58px" width="32" height="22" viewBox="0 0 32 22" fill="none" stroke="#d8d8d8" stroke-width="1.4"><path d="M25 12 V1 H1 V16 H20"/><path d="M4 5.5 H8 M11 5.5 H15 M18 5.5 H22 M4 11.5 H8 M11 11.5 H15 M18 11.5 H22" stroke-width="1.2"/><path d="M26 14 V22 M22 18 H30"/></svg>
<svg style="left:96px;top:61px" width="30" height="14" viewBox="0 0 30 14" fill="#e0e0e0" stroke="#e0e0e0" stroke-width="1.3"><path d="M1 2 L9 7 L1 12Z" stroke="none"/><path d="M29 2 L21 7 L29 12Z" stroke="none"/><path d="M9 7 H21 M12.5 1 V13 M17.5 1 V13"/></svg>
<div class="a" style="left:153px;top:44px;width:1755px;height:62px;overflow:hidden">
<div class="rl" style="left:-28.0px">00:00:00</div>
<div class="rl" style="left:132.0px">00:16:20</div>
<div class="rl" style="left:292.4px">00:33:10</div>
<div class="rl" style="left:452.7px">00:50:00</div>
<div class="rl" style="left:613.0px">01:06:20</div>
<div class="rl" style="left:773.4px">01:23:10</div>
<div class="rl" style="left:933.8px">01:40:00</div>
<div class="rl" style="left:1094.1px">01:56:20</div>
<div class="rl" style="left:1254.5px">02:13:10</div>
<div class="rl" style="left:1414.8px">02:30:00</div>
<div class="rl" style="left:1575.1px">02:46:20</div>
</div>
<svg style="left:153px;top:91px" width="1740" height="15" viewBox="0 0 1740 15" shape-rendering="crispEdges"><path d="M40.5 0V15M80.5 0V15M120.5 0V15M160.5 0V15M200.5 0V15M241.5 0V15M281.5 0V15M321.5 0V15M361.5 0V15M401.5 0V15M441.5 0V15M481.5 0V15M521.5 0V15M561.5 0V15M601.5 0V15M641.5 0V15M681.5 0V15M722.5 0V15M762.5 0V15M802.5 0V15M842.5 0V15M882.5 0V15M922.5 0V15M962.5 0V15M1002.5 0V15M1042.5 0V15M1082.5 0V15M1122.5 0V15M1163.5 0V15M1203.5 0V15M1243.5 0V15M1283.5 0V15M1323.5 0V15M1363.5 0V15M1403.5 0V15M1443.5 0V15M1483.5 0V15M1523.5 0V15M1563.5 0V15M1604.5 0V15M1644.5 0V15M1684.5 0V15M1724.5 0V15" stroke="#98989a" stroke-width="1"/><path d="M8.5 5V15M16.5 5V15M24.5 5V15M32.5 5V15M48.5 5V15M56.5 5V15M64.5 5V15M72.5 5V15M88.5 5V15M96.5 5V15M104.5 5V15M112.5 5V15M128.5 5V15M136.5 5V15M144.5 5V15M152.5 5V15M168.5 5V15M176.5 5V15M184.5 5V15M192.5 5V15M208.5 5V15M216.5 5V15M224.5 5V15M233.5 5V15M249.5 5V15M257.5 5V15M265.5 5V15M273.5 5V15M289.5 5V15M297.5 5V15M305.5 5V15M313.5 5V15M329.5 5V15M337.5 5V15M345.5 5V15M353.5 5V15M369.5 5V15M377.5 5V15M385.5 5V15M393.5 5V15M409.5 5V15M417.5 5V15M425.5 5V15M433.5 5V15M449.5 5V15M457.5 5V15M465.5 5V15M473.5 5V15M489.5 5V15M497.5 5V15M505.5 5V15M513.5 5V15M529.5 5V15M537.5 5V15M545.5 5V15M553.5 5V15M569.5 5V15M577.5 5V15M585.5 5V15M593.5 5V15M609.5 5V15M617.5 5V15M625.5 5V15M633.5 5V15M649.5 5V15M657.5 5V15M665.5 5V15M673.5 5V15M690.5 5V15M698.5 5V15M706.5 5V15M714.5 5V15M730.5 5V15M738.5 5V15M746.5 5V15M754.5 5V15M770.5 5V15M778.5 5V15M786.5 5V15M794.5 5V15M810.5 5V15M818.5 5V15M826.5 5V15M834.5 5V15M850.5 5V15M858.5 5V15M866.5 5V15M874.5 5V15M890.5 5V15M898.5 5V15M906.5 5V15M914.5 5V15M930.5 5V15M938.5 5V15M946.5 5V15M954.5 5V15M970.5 5V15M978.5 5V15M986.5 5V15M994.5 5V15M1010.5 5V15M1018.5 5V15M1026.5 5V15M1034.5 5V15M1050.5 5V15M1058.5 5V15M1066.5 5V15M1074.5 5V15M1090.5 5V15M1098.5 5V15M1106.5 5V15M1114.5 5V15M1130.5 5V15M1138.5 5V15M1147.5 5V15M1155.5 5V15M1171.5 5V15M1179.5 5V15M1187.5 5V15M1195.5 5V15M1211.5 5V15M1219.5 5V15M1227.5 5V15M1235.5 5V15M1251.5 5V15M1259.5 5V15M1267.5 5V15M1275.5 5V15M1291.5 5V15M1299.5 5V15M1307.5 5V15M1315.5 5V15M1331.5 5V15M1339.5 5V15M1347.5 5V15M1355.5 5V15M1371.5 5V15M1379.5 5V15M1387.5 5V15M1395.5 5V15M1411.5 5V15M1419.5 5V15M1427.5 5V15M1435.5 5V15M1451.5 5V15M1459.5 5V15M1467.5 5V15M1475.5 5V15M1491.5 5V15M1499.5 5V15M1507.5 5V15M1515.5 5V15M1531.5 5V15M1539.5 5V15M1547.5 5V15M1555.5 5V15M1571.5 5V15M1579.5 5V15M1587.5 5V15M1595.5 5V15M1612.5 5V15M1620.5 5V15M1628.5 5V15M1636.5 5V15M1652.5 5V15M1660.5 5V15M1668.5 5V15M1676.5 5V15M1692.5 5V15M1700.5 5V15M1708.5 5V15M1716.5 5V15M1732.5 5V15" stroke="#8a8a8c" stroke-width="1"/></svg>
<div class="a" style="left:2px;top:106px;width:147px;height:99px;background:#24252a"></div>
<div class="a" style="left:153px;top:106px;width:1733px;height:99px;background:#24252a"></div>
<div class="a" style="left:2px;top:268px;width:147px;height:36px;background:#212124"></div>
<div class="a" style="left:2px;top:368px;width:147px;height:36px;background:#212124"></div>
<div class="a" style="left:149px;top:106px;width:4px;height:334px;background:#111113"></div>
<div class="tn" style="top:129px">1</div>
<svg style="left:38px;top:131.5px" width="19" height="10" viewBox="0 0 19 11" preserveAspectRatio="none"><rect x="0" y="0" width="13" height="11" rx="1" fill="#a3a4a7"/><path d="M12.5 5.5 L18.5 1.5 V9.5Z" fill="#a3a4a7"/></svg><svg style="left:78px;top:129px" width="19" height="14" viewBox="0 0 19 14" fill="none" stroke="#a3a4a7" stroke-width="1.2"><path d="M0.8 7 Q9.5 -3 18.2 7 Q9.5 17 0.8 7Z"/><circle cx="9.5" cy="7" r="3.1"/></svg><svg style="left:120px;top:128px" width="14.5" height="17" viewBox="0 0 16 18" fill="none" stroke="#a3a4a7" stroke-width="1.2"><rect x="1" y="6.5" width="14" height="10.5"/><path d="M4.5 6.5 V3.5 Q4.5 1 7 1 H10.5 Q13 1 13 3.5"/><circle cx="8" cy="12" r="1.2" fill="#a3a4a7" stroke="none"/></svg>
<div class="tn" style="top:179px">1</div>
<svg style="left:39px;top:177px" width="17" height="18" viewBox="0 0 17 18" fill="#a3a4a7"><path d="M5 3.5 L16 1 V13.5 H14.6 V5 L6.4 6.9 V15.5 H5Z"/><ellipse cx="3.6" cy="15.3" rx="3.2" ry="2.3" transform="rotate(-20 3.6 15.3)"/><ellipse cx="12.8" cy="13.3" rx="3.2" ry="2.3" transform="rotate(-20 12.8 13.3)"/></svg><svg style="left:79px;top:178px" width="18" height="16" viewBox="0 0 18 16" fill="none" stroke="#a3a4a7" stroke-width="1.2"><path d="M1 5 H4.5 L9.5 1 V15 L4.5 11 H1Z" stroke-linejoin="round"/><path d="M12.5 5.5 Q14.5 8 12.5 10.5"/><path d="M15 3.5 Q18 8 15 12.5"/></svg><svg style="left:120px;top:178px" width="14.5" height="17" viewBox="0 0 16 18" fill="none" stroke="#a3a4a7" stroke-width="1.2"><rect x="1" y="6.5" width="14" height="10.5"/><path d="M4.5 6.5 V3.5 Q4.5 1 7 1 H10.5 Q13 1 13 3.5"/><circle cx="8" cy="12" r="1.2" fill="#a3a4a7" stroke="none"/></svg>
<div class="tn" style="top:229px">2</div>
<svg style="left:38px;top:231.5px" width="19" height="10" viewBox="0 0 19 11" preserveAspectRatio="none"><rect x="0" y="0" width="13" height="11" rx="1" fill="#a3a4a7"/><path d="M12.5 5.5 L18.5 1.5 V9.5Z" fill="#a3a4a7"/></svg><svg style="left:78px;top:229px" width="19" height="14" viewBox="0 0 19 14" fill="none" stroke="#a3a4a7" stroke-width="1.2"><path d="M0.8 7 Q9.5 -3 18.2 7 Q9.5 17 0.8 7Z"/><circle cx="9.5" cy="7" r="3.1"/></svg><svg style="left:120px;top:228px" width="14.5" height="17" viewBox="0 0 16 18" fill="none" stroke="#a3a4a7" stroke-width="1.2"><rect x="1" y="6.5" width="14" height="10.5"/><path d="M4.5 6.5 V3.5 Q4.5 1 7 1 H10.5 Q13 1 13 3.5"/><circle cx="8" cy="12" r="1.2" fill="#a3a4a7" stroke="none"/></svg>
<div class="tn" style="top:279px">2</div>
<svg style="left:39px;top:277px" width="17" height="18" viewBox="0 0 17 18" fill="#a3a4a7"><path d="M5 3.5 L16 1 V13.5 H14.6 V5 L6.4 6.9 V15.5 H5Z"/><ellipse cx="3.6" cy="15.3" rx="3.2" ry="2.3" transform="rotate(-20 3.6 15.3)"/><ellipse cx="12.8" cy="13.3" rx="3.2" ry="2.3" transform="rotate(-20 12.8 13.3)"/></svg><svg style="left:79px;top:278px" width="18" height="16" viewBox="0 0 18 16" fill="none" stroke="#a3a4a7" stroke-width="1.2"><path d="M1 5 H4.5 L9.5 1 V15 L4.5 11 H1Z" stroke-linejoin="round"/><path d="M12.5 5.5 Q14.5 8 12.5 10.5"/><path d="M15 3.5 Q18 8 15 12.5"/></svg><svg style="left:120px;top:278px" width="14.5" height="17" viewBox="0 0 16 18" fill="none" stroke="#a3a4a7" stroke-width="1.2"><rect x="1" y="6.5" width="14" height="10.5"/><path d="M4.5 6.5 V3.5 Q4.5 1 7 1 H10.5 Q13 1 13 3.5"/><circle cx="8" cy="12" r="1.2" fill="#a3a4a7" stroke="none"/></svg>
<div class="tn" style="top:329px">3</div>
<svg style="left:38px;top:331.5px" width="19" height="10" viewBox="0 0 19 11" preserveAspectRatio="none"><rect x="0" y="0" width="13" height="11" rx="1" fill="#a3a4a7"/><path d="M12.5 5.5 L18.5 1.5 V9.5Z" fill="#a3a4a7"/></svg><svg style="left:78px;top:329px" width="19" height="14" viewBox="0 0 19 14" fill="none" stroke="#a3a4a7" stroke-width="1.2"><path d="M0.8 7 Q9.5 -3 18.2 7 Q9.5 17 0.8 7Z"/><circle cx="9.5" cy="7" r="3.1"/></svg><svg style="left:120px;top:328px" width="14.5" height="17" viewBox="0 0 16 18" fill="none" stroke="#a3a4a7" stroke-width="1.2"><rect x="1" y="6.5" width="14" height="10.5"/><path d="M4.5 6.5 V3.5 Q4.5 1 7 1 H10.5 Q13 1 13 3.5"/><circle cx="8" cy="12" r="1.2" fill="#a3a4a7" stroke="none"/></svg>
<div class="tn" style="top:379px">3</div>
<svg style="left:39px;top:377px" width="17" height="18" viewBox="0 0 17 18" fill="#a3a4a7"><path d="M5 3.5 L16 1 V13.5 H14.6 V5 L6.4 6.9 V15.5 H5Z"/><ellipse cx="3.6" cy="15.3" rx="3.2" ry="2.3" transform="rotate(-20 3.6 15.3)"/><ellipse cx="12.8" cy="13.3" rx="3.2" ry="2.3" transform="rotate(-20 12.8 13.3)"/></svg><svg style="left:79px;top:378px" width="18" height="16" viewBox="0 0 18 16" fill="none" stroke="#a3a4a7" stroke-width="1.2"><path d="M1 5 H4.5 L9.5 1 V15 L4.5 11 H1Z" stroke-linejoin="round"/><path d="M12.5 5.5 Q14.5 8 12.5 10.5"/><path d="M15 3.5 Q18 8 15 12.5"/></svg><svg style="left:120px;top:378px" width="14.5" height="17" viewBox="0 0 16 18" fill="none" stroke="#a3a4a7" stroke-width="1.2"><rect x="1" y="6.5" width="14" height="10.5"/><path d="M4.5 6.5 V3.5 Q4.5 1 7 1 H10.5 Q13 1 13 3.5"/><circle cx="8" cy="12" r="1.2" fill="#a3a4a7" stroke="none"/></svg>
<div class="a" style="left:154px;top:170px;width:1732px;height:33px;background:#fff;border-radius:4px 0 0 4px"></div>
<div class="a" style="left:157px;top:173px;width:1729px;height:27.5px;background:#5856a8;border-radius:2px 0 0 2px"></div>
<div class="a" style="left:157px;top:192px;width:1729px;height:5px;background:#857ce6"></div>
<svg style="left:157px;top:0px" width="1729" height="210" viewBox="0 0 1729 210"><path d="M0 192.6 L0.0 190.9 L1.3 190.7 L2.6 191.3 L3.9 191.3 L5.2 191.1 L6.5 191.4 L7.8 191.3 L9.1 191.4 L10.4 191.6 L11.7 191.4 L13.0 191.0 L14.3 190.9 L15.6 191.0 L16.9 190.3 L18.2 190.8 L19.5 190.9 L20.8 190.2 L22.1 189.6 L23.4 190.5 L24.7 188.5 L26.0 190.0 L27.3 189.8 L28.6 188.1 L29.9 189.5 L31.2 188.9 L32.5 189.8 L33.8 190.1 L35.1 189.3 L36.4 190.4 L37.7 190.5 L39.0 190.5 L40.3 189.9 L41.6 189.6 L42.9 188.9 L44.2 189.0 L45.5 189.4 L46.8 190.0 L48.1 187.9 L49.4 188.0 L50.7 189.2 L52.0 189.4 L53.3 189.1 L54.6 190.8 L55.9 190.1 L57.2 189.9 L58.5 189.9 L59.8 190.1 L61.1 190.3 L62.4 191.0 L63.7 191.2 L65.0 191.1 L66.3 190.6 L67.6 190.9 L68.9 189.8 L70.2 191.1 L71.5 190.8 L72.8 191.5 L74.1 191.0 L75.4 191.5 L76.7 191.5 L78.0 191.5 L79.3 191.6 L80.6 190.7 L81.9 190.0 L83.2 189.7 L84.5 190.5 L85.8 191.0 L87.1 190.4 L88.4 190.0 L89.7 189.1 L91.0 190.1 L92.3 190.4 L93.6 190.3 L94.9 191.1 L96.2 190.7 L97.5 191.3 L98.8 191.4 L100.1 189.4 L101.4 190.7 L102.7 191.3 L104.0 191.3 L105.3 191.6 L106.6 191.6 L107.9 191.3 L109.2 191.4 L110.5 191.0 L111.8 191.5 L113.1 191.3 L114.4 191.6 L115.7 191.2 L117.0 190.9 L118.3 191.1 L119.6 191.1 L120.9 191.4 L122.2 191.5 L123.5 190.7 L124.8 190.2 L126.1 191.0 L127.4 189.9 L128.7 189.9 L130.0 189.1 L131.3 190.9 L132.6 191.6 L133.9 191.6 L135.2 191.3 L136.5 190.8 L137.8 191.2 L139.1 190.5 L140.4 189.9 L141.7 190.6 L143.0 191.2 L144.3 190.5 L145.6 191.0 L146.9 191.3 L148.2 190.6 L149.5 190.7 L150.8 190.7 L152.1 190.0 L153.4 190.8 L154.7 191.0 L156.0 191.4 L157.3 191.3 L158.6 190.7 L159.9 190.9 L161.2 190.9 L162.5 191.2 L163.8 191.5 L165.1 191.4 L166.4 191.1 L167.7 190.5 L169.0 190.6 L170.3 190.7 L171.6 191.2 L172.9 190.5 L174.2 190.7 L175.5 190.9 L176.8 189.5 L178.1 190.1 L179.4 190.4 L180.7 189.8 L182.0 187.3 L183.3 189.6 L184.6 189.6 L185.9 189.8 L187.2 189.9 L188.5 188.9 L189.8 189.6 L191.1 189.8 L192.4 188.5 L193.7 188.2 L195.0 190.2 L196.3 188.9 L197.6 190.1 L198.9 190.0 L200.2 190.2 L201.5 190.0 L202.8 189.5 L204.1 190.0 L205.4 189.8 L206.7 189.7 L208.0 190.5 L209.3 190.9 L210.6 190.7 L211.9 190.6 L213.2 190.5 L214.5 191.4 L215.8 190.6 L217.1 191.2 L218.4 190.5 L219.7 191.2 L221.0 191.1 L222.3 189.8 L223.6 190.8 L224.9 191.2 L226.2 190.7 L227.5 191.1 L228.8 189.5 L230.1 190.7 L231.4 190.9 L232.7 191.2 L234.0 190.7 L235.3 189.5 L236.6 189.5 L237.9 190.4 L239.2 189.1 L240.5 189.0 L241.8 189.0 L243.1 188.7 L244.4 188.2 L245.7 188.7 L247.0 190.7 L248.3 190.7 L249.6 189.8 L250.9 190.1 L252.2 189.7 L253.5 188.7 L254.8 189.4 L256.1 190.7 L257.4 190.2 L258.7 190.3 L260.0 189.0 L261.3 190.8 L262.6 191.3 L263.9 190.8 L265.2 189.6 L266.5 190.9 L267.8 190.9 L269.1 191.1 L270.4 190.7 L271.7 190.0 L273.0 191.0 L274.3 190.8 L275.6 189.8 L276.9 191.4 L278.2 191.6 L279.5 191.0 L280.8 190.7 L282.1 188.0 L283.4 190.2 L284.7 191.1 L286.0 191.4 L287.3 190.8 L288.6 190.6 L289.9 190.3 L291.2 191.1 L292.5 191.1 L293.8 190.5 L295.1 190.8 L296.4 191.1 L297.7 190.0 L299.0 190.1 L300.3 189.5 L301.6 189.2 L302.9 190.6 L304.2 190.2 L305.5 190.6 L306.8 190.8 L308.1 188.2 L309.4 189.4 L310.7 190.2 L312.0 189.5 L313.3 190.8 L314.6 189.1 L315.9 190.1 L317.2 190.0 L318.5 189.3 L319.8 188.4 L321.1 189.4 L322.4 189.0 L323.7 189.5 L325.0 190.3 L326.3 190.4 L327.6 189.5 L328.9 190.0 L330.2 189.7 L331.5 190.3 L332.8 188.7 L334.1 189.0 L335.4 189.5 L336.7 188.2 L338.0 189.5 L339.3 189.8 L340.6 190.5 L341.9 189.8 L343.2 190.1 L344.5 190.7 L345.8 190.5 L347.1 190.5 L348.4 190.6 L349.7 189.6 L351.0 190.9 L352.3 190.4 L353.6 190.2 L354.9 190.2 L356.2 191.1 L357.5 191.6 L358.8 191.5 L360.1 191.4 L361.4 190.7 L362.7 190.0 L364.0 191.5 L365.3 191.6 L366.6 191.4 L367.9 191.6 L369.2 191.2 L370.5 191.2 L371.8 190.3 L373.1 190.2 L374.4 191.2 L375.7 189.6 L377.0 189.3 L378.3 190.0 L379.6 190.7 L380.9 189.6 L382.2 190.0 L383.5 189.1 L384.8 190.1 L386.1 189.1 L387.4 190.6 L388.7 189.6 L390.0 188.3 L391.3 189.6 L392.6 188.2 L393.9 188.7 L395.2 189.1 L396.5 189.3 L397.8 190.4 L399.1 190.9 L400.4 191.3 L401.7 191.4 L403.0 191.0 L404.3 191.5 L405.6 191.5 L406.9 191.4 L408.2 191.3 L409.5 191.2 L410.8 190.6 L412.1 191.2 L413.4 191.3 L414.7 191.3 L416.0 191.6 L417.3 191.1 L418.6 191.5 L419.9 191.2 L421.2 189.6 L422.5 190.8 L423.8 190.4 L425.1 191.3 L426.4 190.8 L427.7 190.9 L429.0 190.8 L430.3 189.3 L431.6 188.6 L432.9 190.3 L434.2 189.5 L435.5 190.7 L436.8 188.2 L438.1 188.7 L439.4 189.4 L440.7 189.7 L442.0 189.8 L443.3 188.1 L444.6 188.5 L445.9 189.8 L447.2 188.7 L448.5 189.8 L449.8 189.4 L451.1 188.1 L452.4 189.1 L453.7 188.6 L455.0 189.3 L456.3 189.7 L457.6 188.4 L458.9 188.8 L460.2 189.5 L461.5 189.3 L462.8 190.3 L464.1 189.5 L465.4 190.5 L466.7 190.7 L468.0 190.4 L469.3 189.7 L470.6 190.7 L471.9 190.3 L473.2 190.9 L474.5 189.4 L475.8 191.1 L477.1 191.1 L478.4 190.9 L479.7 190.8 L481.0 189.8 L482.3 189.8 L483.6 191.2 L484.9 190.4 L486.2 191.1 L487.5 190.9 L488.8 189.4 L490.1 190.5 L491.4 191.2 L492.7 190.5 L494.0 189.8 L495.3 190.6 L496.6 190.8 L497.9 190.7 L499.2 190.3 L500.5 191.1 L501.8 191.3 L503.1 190.7 L504.4 190.7 L505.7 191.3 L507.0 190.8 L508.3 191.5 L509.6 191.5 L510.9 191.3 L512.2 191.5 L513.5 191.4 L514.8 191.2 L516.1 191.1 L517.4 190.7 L518.7 191.2 L520.0 191.3 L521.3 190.8 L522.6 190.0 L523.9 190.0 L525.2 190.1 L526.5 190.5 L527.8 189.3 L529.1 189.4 L530.4 188.5 L531.7 189.2 L533.0 189.3 L534.3 189.0 L535.6 188.6 L536.9 188.9 L538.2 189.3 L539.5 189.1 L540.8 189.6 L542.1 190.2 L543.4 190.0 L544.7 190.9 L546.0 190.6 L547.3 191.0 L548.6 190.6 L549.9 191.3 L551.2 191.1 L552.5 190.7 L553.8 190.6 L555.1 190.6 L556.4 188.9 L557.7 190.2 L559.0 189.9 L560.3 189.7 L561.6 189.3 L562.9 189.9 L564.2 189.4 L565.5 188.8 L566.8 189.2 L568.1 190.5 L569.4 189.9 L570.7 189.0 L572.0 190.7 L573.3 188.7 L574.6 189.2 L575.9 189.6 L577.2 189.7 L578.5 190.8 L579.8 189.1 L581.1 190.0 L582.4 189.8 L583.7 189.0 L585.0 190.8 L586.3 191.4 L587.6 191.3 L588.9 190.8 L590.2 191.0 L591.5 190.6 L592.8 191.3 L594.1 191.4 L595.4 189.9 L596.7 191.5 L598.0 191.5 L599.3 191.2 L600.6 191.3 L601.9 191.4 L603.2 191.3 L604.5 191.3 L605.8 191.1 L607.1 190.8 L608.4 190.6 L609.7 191.0 L611.0 190.7 L612.3 191.0 L613.6 190.6 L614.9 191.2 L616.2 191.1 L617.5 191.1 L618.8 190.5 L620.1 190.3 L621.4 190.3 L622.7 191.2 L624.0 190.5 L625.3 190.5 L626.6 190.9 L627.9 190.3 L629.2 190.4 L630.5 189.1 L631.8 190.5 L633.1 190.4 L634.4 191.1 L635.7 191.2 L637.0 190.7 L638.3 191.3 L639.6 190.7 L640.9 191.1 L642.2 191.1 L643.5 191.2 L644.8 191.0 L646.1 191.2 L647.4 190.6 L648.7 191.0 L650.0 190.6 L651.3 190.2 L652.6 190.0 L653.9 189.5 L655.2 190.9 L656.5 190.8 L657.8 189.0 L659.1 190.0 L660.4 189.8 L661.7 189.9 L663.0 189.9 L664.3 189.9 L665.6 189.3 L666.9 189.9 L668.2 188.7 L669.5 190.2 L670.8 189.4 L672.1 189.6 L673.4 190.6 L674.7 190.4 L676.0 189.8 L677.3 190.8 L678.6 190.5 L679.9 190.6 L681.2 190.9 L682.5 190.8 L683.8 190.9 L685.1 191.0 L686.4 190.6 L687.7 190.6 L689.0 190.6 L690.3 191.1 L691.6 191.3 L692.9 191.4 L694.2 191.5 L695.5 191.4 L696.8 191.3 L698.1 191.3 L699.4 190.8 L700.7 190.1 L702.0 191.2 L703.3 190.6 L704.6 190.0 L705.9 190.8 L707.2 191.1 L708.5 189.3 L709.8 189.6 L711.1 191.0 L712.4 190.8 L713.7 189.0 L715.0 191.0 L716.3 191.3 L717.6 191.0 L718.9 191.1 L720.2 190.0 L721.5 191.1 L722.8 190.9 L724.1 190.8 L725.4 189.9 L726.7 190.4 L728.0 190.8 L729.3 191.0 L730.6 190.8 L731.9 190.2 L733.2 190.1 L734.5 190.2 L735.8 190.4 L737.1 189.5 L738.4 190.2 L739.7 190.7 L741.0 188.8 L742.3 191.0 L743.6 190.7 L744.9 190.2 L746.2 191.2 L747.5 191.4 L748.8 191.4 L750.1 191.3 L751.4 191.6 L752.7 191.4 L754.0 191.6 L755.3 191.3 L756.6 191.4 L757.9 191.4 L759.2 191.2 L760.5 191.0 L761.8 191.3 L763.1 191.3 L764.4 189.9 L765.7 189.6 L767.0 191.0 L768.3 190.8 L769.6 189.8 L770.9 189.5 L772.2 190.6 L773.5 189.6 L774.8 189.3 L776.1 189.2 L777.4 190.1 L778.7 188.0 L780.0 190.0 L781.3 189.9 L782.6 189.2 L783.9 190.1 L785.2 188.1 L786.5 190.1 L787.8 189.2 L789.1 189.7 L790.4 188.9 L791.7 189.4 L793.0 189.8 L794.3 188.6 L795.6 189.1 L796.9 190.1 L798.2 189.7 L799.5 189.1 L800.8 190.2 L802.1 188.9 L803.4 190.4 L804.7 189.1 L806.0 190.2 L807.3 188.6 L808.6 189.0 L809.9 190.3 L811.2 188.6 L812.5 190.5 L813.8 190.3 L815.1 189.0 L816.4 189.6 L817.7 190.4 L819.0 190.3 L820.3 190.3 L821.6 190.4 L822.9 189.7 L824.2 190.2 L825.5 190.6 L826.8 189.3 L828.1 189.8 L829.4 189.7 L830.7 190.0 L832.0 190.0 L833.3 189.1 L834.6 190.0 L835.9 190.0 L837.2 190.4 L838.5 190.1 L839.8 189.5 L841.1 190.0 L842.4 188.4 L843.7 190.2 L845.0 189.6 L846.3 189.3 L847.6 190.7 L848.9 190.1 L850.2 189.4 L851.5 189.9 L852.8 189.8 L854.1 188.3 L855.4 189.1 L856.7 189.8 L858.0 188.0 L859.3 190.2 L860.6 188.2 L861.9 189.8 L863.2 189.0 L864.5 189.6 L865.8 189.5 L867.1 190.8 L868.4 190.5 L869.7 190.7 L871.0 190.9 L872.3 190.9 L873.6 190.5 L874.9 190.8 L876.2 190.2 L877.5 190.0 L878.8 189.8 L880.1 190.5 L881.4 190.4 L882.7 189.7 L884.0 189.8 L885.3 190.9 L886.6 190.5 L887.9 190.9 L889.2 190.2 L890.5 190.2 L891.8 189.6 L893.1 189.4 L894.4 190.5 L895.7 188.8 L897.0 190.5 L898.3 189.3 L899.6 189.3 L900.9 190.3 L902.2 190.6 L903.5 189.4 L904.8 188.6 L906.1 189.0 L907.4 190.8 L908.7 190.8 L910.0 190.7 L911.3 190.3 L912.6 190.6 L913.9 190.6 L915.2 190.8 L916.5 191.5 L917.8 191.4 L919.1 189.9 L920.4 191.2 L921.7 191.0 L923.0 190.8 L924.3 191.6 L925.6 191.5 L926.9 191.4 L928.2 191.5 L929.5 191.6 L930.8 191.3 L932.1 191.5 L933.4 191.1 L934.7 191.5 L936.0 191.4 L937.3 191.4 L938.6 191.3 L939.9 191.5 L941.2 191.6 L942.5 191.0 L943.8 190.9 L945.1 189.4 L946.4 190.0 L947.7 190.8 L949.0 191.5 L950.3 191.5 L951.6 191.3 L952.9 190.9 L954.2 190.8 L955.5 190.9 L956.8 190.5 L958.1 189.7 L959.4 190.5 L960.7 190.0 L962.0 189.0 L963.3 190.5 L964.6 190.1 L965.9 190.4 L967.2 190.5 L968.5 189.1 L969.8 190.2 L971.1 189.9 L972.4 190.4 L973.7 191.1 L975.0 191.0 L976.3 190.6 L977.6 191.1 L978.9 191.5 L980.2 191.5 L981.5 191.3 L982.8 191.6 L984.1 191.3 L985.4 191.3 L986.7 191.3 L988.0 191.3 L989.3 191.5 L990.6 191.4 L991.9 189.6 L993.2 190.8 L994.5 189.9 L995.8 190.9 L997.1 191.3 L998.4 191.1 L999.7 191.3 L1001.0 191.5 L1002.3 191.3 L1003.6 191.5 L1004.9 191.5 L1006.2 191.5 L1007.5 191.1 L1008.8 191.3 L1010.1 191.3 L1011.4 191.2 L1012.7 190.8 L1014.0 190.8 L1015.3 191.2 L1016.6 191.0 L1017.9 191.1 L1019.2 190.9 L1020.5 191.0 L1021.8 189.7 L1023.1 189.5 L1024.4 188.6 L1025.7 190.2 L1027.0 189.9 L1028.3 188.8 L1029.6 190.0 L1030.9 188.9 L1032.2 190.5 L1033.5 189.7 L1034.8 189.7 L1036.1 189.0 L1037.4 188.1 L1038.7 189.2 L1040.0 189.8 L1041.3 190.1 L1042.6 188.6 L1043.9 190.4 L1045.2 189.9 L1046.5 190.4 L1047.8 190.4 L1049.1 190.0 L1050.4 188.1 L1051.7 188.2 L1053.0 189.8 L1054.3 189.3 L1055.6 188.8 L1056.9 190.6 L1058.2 188.7 L1059.5 190.2 L1060.8 188.4 L1062.1 188.8 L1063.4 187.9 L1064.7 190.6 L1066.0 189.9 L1067.3 190.1 L1068.6 188.9 L1069.9 190.7 L1071.2 189.6 L1072.5 189.9 L1073.8 190.4 L1075.1 190.8 L1076.4 190.3 L1077.7 190.3 L1079.0 189.8 L1080.3 190.3 L1081.6 187.9 L1082.9 189.5 L1084.2 189.7 L1085.5 190.0 L1086.8 190.3 L1088.1 190.5 L1089.4 189.3 L1090.7 189.8 L1092.0 189.9 L1093.3 191.2 L1094.6 191.0 L1095.9 190.9 L1097.2 190.8 L1098.5 190.8 L1099.8 191.0 L1101.1 191.3 L1102.4 191.4 L1103.7 191.6 L1105.0 191.3 L1106.3 190.8 L1107.6 191.5 L1108.9 190.6 L1110.2 190.5 L1111.5 190.7 L1112.8 188.3 L1114.1 190.0 L1115.4 189.5 L1116.7 190.1 L1118.0 188.9 L1119.3 188.7 L1120.6 190.7 L1121.9 190.1 L1123.2 190.8 L1124.5 189.3 L1125.8 189.1 L1127.1 190.2 L1128.4 189.7 L1129.7 188.8 L1131.0 189.3 L1132.3 190.4 L1133.6 190.5 L1134.9 188.8 L1136.2 190.7 L1137.5 189.8 L1138.8 190.0 L1140.1 190.3 L1141.4 190.9 L1142.7 189.0 L1144.0 190.5 L1145.3 190.0 L1146.6 190.0 L1147.9 190.1 L1149.2 190.0 L1150.5 190.9 L1151.8 190.4 L1153.1 190.7 L1154.4 191.1 L1155.7 191.0 L1157.0 191.0 L1158.3 190.8 L1159.6 190.1 L1160.9 191.1 L1162.2 189.8 L1163.5 190.4 L1164.8 190.8 L1166.1 191.2 L1167.4 190.0 L1168.7 190.4 L1170.0 190.7 L1171.3 189.0 L1172.6 189.9 L1173.9 190.8 L1175.2 190.8 L1176.5 190.2 L1177.8 190.1 L1179.1 189.1 L1180.4 188.7 L1181.7 189.2 L1183.0 188.7 L1184.3 189.4 L1185.6 189.6 L1186.9 189.9 L1188.2 188.3 L1189.5 189.3 L1190.8 189.1 L1192.1 190.4 L1193.4 190.6 L1194.7 190.1 L1196.0 190.2 L1197.3 189.2 L1198.6 189.6 L1199.9 190.0 L1201.2 189.2 L1202.5 190.1 L1203.8 190.6 L1205.1 191.4 L1206.4 190.6 L1207.7 190.7 L1209.0 189.4 L1210.3 190.1 L1211.6 190.1 L1212.9 191.0 L1214.2 190.1 L1215.5 189.4 L1216.8 189.3 L1218.1 190.2 L1219.4 190.1 L1220.7 190.1 L1222.0 189.2 L1223.3 190.1 L1224.6 189.9 L1225.9 188.8 L1227.2 188.5 L1228.5 189.6 L1229.8 188.9 L1231.1 189.1 L1232.4 189.5 L1233.7 188.8 L1235.0 190.6 L1236.3 189.1 L1237.6 188.5 L1238.9 189.5 L1240.2 190.4 L1241.5 189.9 L1242.8 190.0 L1244.1 188.3 L1245.4 189.9 L1246.7 190.0 L1248.0 189.2 L1249.3 188.7 L1250.6 189.2 L1251.9 190.3 L1253.2 189.9 L1254.5 190.7 L1255.8 191.3 L1257.1 191.2 L1258.4 190.5 L1259.7 189.8 L1261.0 191.5 L1262.3 191.6 L1263.6 191.6 L1264.9 190.8 L1266.2 191.3 L1267.5 190.9 L1268.8 191.0 L1270.1 189.7 L1271.4 191.2 L1272.7 190.7 L1274.0 190.9 L1275.3 188.9 L1276.6 189.5 L1277.9 189.0 L1279.2 190.5 L1280.5 189.5 L1281.8 190.2 L1283.1 189.5 L1284.4 189.9 L1285.7 189.4 L1287.0 190.0 L1288.3 188.2 L1289.6 190.3 L1290.9 189.5 L1292.2 188.8 L1293.5 189.5 L1294.8 190.8 L1296.1 188.6 L1297.4 190.7 L1298.7 189.9 L1300.0 191.3 L1301.3 190.6 L1302.6 191.2 L1303.9 191.3 L1305.2 190.9 L1306.5 191.5 L1307.8 191.3 L1309.1 190.5 L1310.4 189.8 L1311.7 189.8 L1313.0 189.5 L1314.3 191.0 L1315.6 190.8 L1316.9 191.2 L1318.2 191.0 L1319.5 190.4 L1320.8 190.9 L1322.1 190.3 L1323.4 189.9 L1324.7 190.1 L1326.0 191.1 L1327.3 191.5 L1328.6 190.7 L1329.9 191.5 L1331.2 191.4 L1332.5 191.0 L1333.8 191.3 L1335.1 191.5 L1336.4 191.4 L1337.7 191.6 L1339.0 191.6 L1340.3 191.2 L1341.6 190.5 L1342.9 191.3 L1344.2 191.0 L1345.5 190.7 L1346.8 190.7 L1348.1 190.5 L1349.4 191.3 L1350.7 190.7 L1352.0 190.7 L1353.3 190.0 L1354.6 190.4 L1355.9 189.6 L1357.2 190.0 L1358.5 190.0 L1359.8 190.5 L1361.1 190.6 L1362.4 190.1 L1363.7 190.7 L1365.0 189.0 L1366.3 187.9 L1367.6 190.2 L1368.9 190.8 L1370.2 191.0 L1371.5 190.3 L1372.8 189.8 L1374.1 190.2 L1375.4 189.4 L1376.7 189.6 L1378.0 190.4 L1379.3 189.7 L1380.6 189.7 L1381.9 190.1 L1383.2 188.3 L1384.5 189.5 L1385.8 189.2 L1387.1 188.6 L1388.4 190.4 L1389.7 188.7 L1391.0 188.6 L1392.3 190.6 L1393.6 190.8 L1394.9 190.6 L1396.2 190.9 L1397.5 188.4 L1398.8 189.7 L1400.1 190.2 L1401.4 190.6 L1402.7 189.5 L1404.0 189.8 L1405.3 189.4 L1406.6 189.4 L1407.9 190.5 L1409.2 190.6 L1410.5 191.2 L1411.8 190.4 L1413.1 190.0 L1414.4 191.3 L1415.7 190.8 L1417.0 190.3 L1418.3 190.5 L1419.6 190.2 L1420.9 191.2 L1422.2 189.1 L1423.5 190.2 L1424.8 189.8 L1426.1 188.6 L1427.4 188.8 L1428.7 190.0 L1430.0 189.2 L1431.3 189.1 L1432.6 189.5 L1433.9 189.7 L1435.2 189.5 L1436.5 188.7 L1437.8 189.6 L1439.1 190.1 L1440.4 189.7 L1441.7 189.7 L1443.0 189.2 L1444.3 189.3 L1445.6 189.6 L1446.9 190.0 L1448.2 190.2 L1449.5 188.8 L1450.8 190.0 L1452.1 190.7 L1453.4 191.2 L1454.7 190.6 L1456.0 189.7 L1457.3 190.8 L1458.6 191.1 L1459.9 191.5 L1461.2 191.4 L1462.5 191.1 L1463.8 190.7 L1465.1 191.4 L1466.4 190.7 L1467.7 190.5 L1469.0 190.4 L1470.3 190.6 L1471.6 191.2 L1472.9 191.3 L1474.2 191.5 L1475.5 189.9 L1476.8 191.4 L1478.1 190.6 L1479.4 191.2 L1480.7 190.0 L1482.0 191.0 L1483.3 191.4 L1484.6 191.4 L1485.9 191.5 L1487.2 191.2 L1488.5 191.0 L1489.8 190.9 L1491.1 190.6 L1492.4 191.5 L1493.7 191.6 L1495.0 191.4 L1496.3 191.6 L1497.6 191.4 L1498.9 191.5 L1500.2 191.6 L1501.5 191.6 L1502.8 191.2 L1504.1 191.1 L1505.4 191.0 L1506.7 190.8 L1508.0 191.2 L1509.3 191.0 L1510.6 191.1 L1511.9 190.5 L1513.2 190.9 L1514.5 190.4 L1515.8 190.6 L1517.1 191.6 L1518.4 189.8 L1519.7 191.4 L1521.0 191.0 L1522.3 190.1 L1523.6 190.6 L1524.9 190.9 L1526.2 191.4 L1527.5 191.3 L1528.8 191.0 L1530.1 190.8 L1531.4 191.2 L1532.7 191.5 L1534.0 191.6 L1535.3 191.5 L1536.6 191.5 L1537.9 191.5 L1539.2 190.6 L1540.5 189.8 L1541.8 190.5 L1543.1 189.2 L1544.4 191.1 L1545.7 190.0 L1547.0 190.8 L1548.3 191.4 L1549.6 191.3 L1550.9 191.3 L1552.2 191.3 L1553.5 191.5 L1554.8 191.5 L1556.1 191.1 L1557.4 191.6 L1558.7 191.0 L1560.0 191.3 L1561.3 190.9 L1562.6 191.2 L1563.9 190.6 L1565.2 190.1 L1566.5 190.8 L1567.8 190.2 L1569.1 191.3 L1570.4 191.1 L1571.7 191.5 L1573.0 191.4 L1574.3 191.3 L1575.6 191.4 L1576.9 189.9 L1578.2 191.0 L1579.5 190.9 L1580.8 191.5 L1582.1 190.8 L1583.4 191.1 L1584.7 191.4 L1586.0 191.5 L1587.3 191.5 L1588.6 191.5 L1589.9 191.5 L1591.2 191.4 L1592.5 190.8 L1593.8 191.1 L1595.1 191.3 L1596.4 190.7 L1597.7 189.6 L1599.0 190.2 L1600.3 190.1 L1601.6 190.6 L1602.9 189.9 L1604.2 190.8 L1605.5 189.9 L1606.8 190.7 L1608.1 188.7 L1609.4 188.5 L1610.7 190.8 L1612.0 189.2 L1613.3 189.3 L1614.6 190.5 L1615.9 190.4 L1617.2 190.8 L1618.5 191.0 L1619.8 191.5 L1621.1 191.4 L1622.4 191.5 L1623.7 191.4 L1625.0 191.4 L1626.3 191.5 L1627.6 191.2 L1628.9 191.2 L1630.2 191.1 L1631.5 190.4 L1632.8 189.8 L1634.1 189.6 L1635.4 190.8 L1636.7 190.6 L1638.0 189.7 L1639.3 190.2 L1640.6 190.4 L1641.9 189.6 L1643.2 189.0 L1644.5 189.3 L1645.8 188.2 L1647.1 190.2 L1648.4 188.9 L1649.7 188.6 L1651.0 190.0 L1652.3 189.0 L1653.6 190.5 L1654.9 188.2 L1656.2 190.5 L1657.5 189.9 L1658.8 188.6 L1660.1 189.8 L1661.4 190.3 L1662.7 189.3 L1664.0 188.3 L1665.3 190.2 L1666.6 188.1 L1667.9 190.1 L1669.2 188.7 L1670.5 189.2 L1671.8 189.3 L1673.1 189.3 L1674.4 190.5 L1675.7 189.9 L1677.0 189.2 L1678.3 188.4 L1679.6 188.9 L1680.9 188.8 L1682.2 189.4 L1683.5 189.9 L1684.8 189.7 L1686.1 188.3 L1687.4 189.5 L1688.7 190.0 L1690.0 189.6 L1691.3 190.8 L1692.6 189.9 L1693.9 190.4 L1695.2 190.2 L1696.5 189.2 L1697.8 189.9 L1699.1 190.4 L1700.4 189.5 L1701.7 189.0 L1703.0 189.5 L1704.3 188.7 L1705.6 188.0 L1706.9 189.1 L1708.2 189.2 L1709.5 189.3 L1710.8 187.8 L1712.1 188.8 L1713.4 189.9 L1714.7 190.3 L1716.0 190.5 L1717.3 190.9 L1718.6 189.9 L1719.9 190.1 L1721.2 188.7 L1722.5 189.6 L1723.8 188.3 L1725.1 188.4 L1726.4 188.6 L1727.7 190.4 L1729.0 188.5 L1729 192.6Z" fill="#d2d0f4" opacity="0.85"/></svg>
<svg style="left:161px;top:175px" width="14" height="14" viewBox="0 0 17 18" fill="none" stroke="#e8e8f4" stroke-width="1.5"><path d="M5.5 15 V3.5 L15.5 1.5 V13"/><path d="M5.5 6 L15.5 4" stroke-width="1"/><circle cx="3.5" cy="15" r="2.2" fill="#e8e8f4" stroke="none"/><circle cx="13.5" cy="13" r="2.2" fill="#e8e8f4" stroke="none"/></svg>
<div class="a" style="left:184px;top:174px;font-size:11px;color:#fff">sample</div>
<div class="a" style="left:155px;top:188px;width:5px;height:5px;background:#e8e8e8;border-radius:50%"></div>
<div class="a" style="left:153px;top:50px;width:1px;height:386px;background:#d03a3a"></div>
<svg style="left:153px;top:47px" width="18" height="20" viewBox="0 0 18 20"><path d="M0 1 H5 Q8 1 8 4 V7 L0 16Z" fill="#e02020"/><path d="M1 18.5 L9 7.5 H16.5 V18.5Z" fill="#7d7033" stroke="#f3c27e" stroke-width="1"/></svg>
<div class="a" style="left:1893px;top:102px;width:9px;height:334px;background:#2e2f33;border-radius:4px"></div>
<div class="a" style="left:1893px;top:102px;width:9px;height:306px;background:#55565e;border-radius:4px"></div>
<div class="a" style="left:0;top:441px;width:1908px;height:37px;background:#1c1c1e;border-top:2px solid #0f0f11"></div>
<div class="a" style="left:6px;top:453px;width:14px;height:14px;background:#e0e0e0;border-radius:50%"></div><div class="a" style="left:9px;top:459.3px;width:8px;height:1.4px;background:#1b1b1d"></div>
<div class="a" style="left:34px;top:460px;width:86px;height:1px;background:#6a6a6e"></div>
<div class="a" style="left:92px;top:453px;width:13px;height:13px;background:#d8d8d8;border-radius:50%"></div>
<div class="a" style="left:135px;top:453px;width:14px;height:14px;background:#e0e0e0;border-radius:50%"></div><div class="a" style="left:138px;top:459.3px;width:8px;height:1.4px;background:#1b1b1d"></div><div class="a" style="left:141.3px;top:456px;width:1.4px;height:8px;background:#1b1b1d"></div>
<div class="a" style="left:154px;top:455px;width:1733px;height:9px;background:#2e2f33;border-radius:4px"></div>
<div class="a" style="left:154px;top:455px;width:692px;height:9px;background:#57585e;border-radius:4px"></div>
</div>
</body></html>
